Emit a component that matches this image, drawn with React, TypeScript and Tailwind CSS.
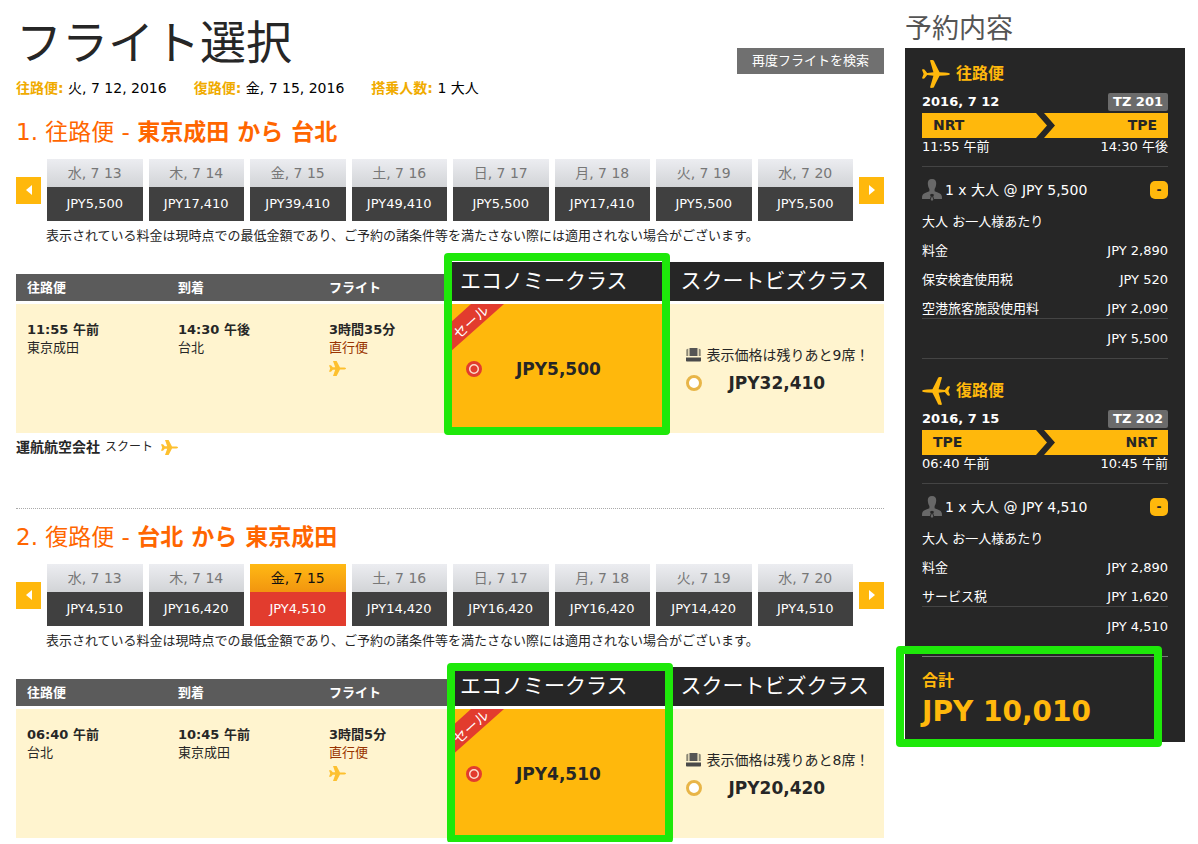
import React from 'react';

type Fare = { day: string; price: string; active?: boolean };

type Leg = {
  id: string;
  number: number;
  label: string;
  from: string;
  to: string;
  fares: Fare[];
  departTime: string;
  arriveTime: string;
  duration: string;
  economy: string;
  biz: string;
  seats: number;
};

const DAYS = ['水, 7 13', '木, 7 14', '金, 7 15', '土, 7 16', '日, 7 17', '月, 7 18', '火, 7 19', '水, 7 20'];

const fares = (prices: string[], active = -1): Fare[] =>
  prices.map((price, i) => ({ day: DAYS[i], price, active: i === active }));

const LEGS: Leg[] = [
  {
    id: 'outbound',
    number: 1,
    label: '往路便',
    from: '東京成田',
    to: '台北',
    fares: fares(['JPY5,500', 'JPY17,410', 'JPY39,410', 'JPY49,410', 'JPY5,500', 'JPY17,410', 'JPY5,500', 'JPY5,500']),
    departTime: '11:55 午前',
    arriveTime: '14:30 午後',
    duration: '3時間35分',
    economy: 'JPY5,500',
    biz: 'JPY32,410',
    seats: 9,
  },
  {
    id: 'inbound',
    number: 2,
    label: '復路便',
    from: '台北',
    to: '東京成田',
    fares: fares(['JPY4,510', 'JPY16,420', 'JPY4,510', 'JPY14,420', 'JPY16,420', 'JPY16,420', 'JPY14,420', 'JPY4,510'], 2),
    departTime: '06:40 午前',
    arriveTime: '10:45 午前',
    duration: '3時間5分',
    economy: 'JPY4,510',
    biz: 'JPY20,420',
    seats: 8,
  },
];

function SmallPlane() {
  return (
    <svg viewBox="0 0 17 15" className="h-[15px] w-[17px] shrink-0 fill-[#fdc02f]" aria-hidden="true">
      <path d="M17 7.5C17 6.8 15.8 6.5 14.4 6.5H11L7.6 0H4L6.2 6.2H3.8L2 4.2H0L1.2 7.5L0 10.8H2L3.8 8.8H6.2L4 15H7.6L11 8.5H14.4C15.8 8.5 17 8.2 17 7.5Z" />
    </svg>
  );
}

function LargePlane({ flipped = false }: { flipped?: boolean }) {
  return (
    <svg
      viewBox="0 0 28 28"
      className={`h-7 w-7 shrink-0 fill-[#ffb80c] ${flipped ? '-scale-x-100' : ''}`}
      aria-hidden="true"
    >
      <path d="M28 14C28 13.2 26 12.7 23 12.5L17.6 12.2C15.5 8.4 13.4 4 12 1C11.4 0 9 -.2 8 .6L11.4 12.2L5.2 12.9L2.6 9.8C2 9.2 .6 9.2 0 9.8L1.6 14L0 18.2C.6 18.8 2 18.8 2.6 18.2L5.2 15.1L11.4 15.8L8 27.4C9 28.2 11.4 28 12 27C13.4 24 15.5 19.6 17.6 15.8L23 15.5C26 15.3 28 14.8 28 14Z" />
    </svg>
  );
}

function PersonIcon() {
  return (
    <svg viewBox="0 0 20 22" className="h-[22px] w-5 shrink-0 fill-[#686868]" aria-hidden="true">
      <path d="M10 0C6.9 0 5.7 2 5.8 4.6C5.9 7 6.6 9 7.4 10V12.2C4 13.6 .5 14.4 .1 17.4L0 20H8L8.8 17.2L7.8 15.8L10 14.8L12.2 15.8L11.2 17.2L12 20H20L19.9 17.4C19.5 14.4 16 13.6 12.6 12.2V10C13.4 9 14.1 7 14.2 4.6C14.3 2 13.1 0 10 0Z" />
      <path d="M10 17L8.6 20.4L10 22L11.4 20.4Z" />
    </svg>
  );
}

function SeatIcon() {
  return (
    <svg viewBox="0 0 15 14" className="h-[14px] w-[15px] shrink-0" aria-hidden="true">
      <path d="M3.5 0H11.5V8H3.5Z" fill="#555" />
      <path d="M.3 1.5L2.3.5V8H.3ZM12.7.5L14.7 1.5V8H12.7Z" fill="#8b8775" />
      <path d="M0 9.5H15V12.5C15 13.3 14.5 13.6 14 13.6H1C.5 13.6 0 13.3 0 12.5Z" fill="#4a4a4a" />
    </svg>
  );
}

function PagerButton({ direction }: { direction: 'prev' | 'next' }) {
  return (
    <button
      type="button"
      aria-label={direction === 'prev' ? '前へ' : '次へ'}
      className="flex h-[27px] w-[25px] shrink-0 items-center justify-center bg-[#ffb80c]"
    >
      <svg viewBox="0 0 6 10" className="h-[10px] w-[6px] fill-white" aria-hidden="true">
        <path d={direction === 'prev' ? 'M6 0V10L0 5Z' : 'M0 0V10L6 5Z'} />
      </svg>
    </button>
  );
}

function FareTabs({ items }: { items: Fare[] }) {
  return (
    <div className="mt-[13px] flex items-center gap-[6px]">
      <PagerButton direction="prev" />
      <div className="flex flex-1 gap-[6px]">
        {items.map((f) => (
          <button key={f.day} type="button" className="flex flex-1 flex-col whitespace-nowrap text-center">
            <span
              className={`h-[28px] w-full bg-linear-to-b text-[14px] leading-[28px] ${
                f.active ? 'from-[#ffb914] to-[#f2950f] text-[#111111]' : 'from-[#ecedf1] to-[#d2d4d7] text-[#777777]'
              }`}
            >
              {f.day}
            </span>
            <span
              className={`h-[34px] w-full text-[13px] leading-[34px] text-white ${
                f.active ? 'bg-[#e23c2e]' : 'bg-[#404040]'
              }`}
            >
              {f.price}
            </span>
          </button>
        ))}
      </div>
      <PagerButton direction="next" />
    </div>
  );
}

function FlightTable({ leg, highlight }: { leg: Leg; highlight: string }) {
  return (
    <div className="relative mt-4">
      <table className="w-full table-fixed border-collapse text-left text-[13px] text-[#262626]">
        <colgroup>
          <col className="w-[17.4%]" />
          <col className="w-[17.4%]" />
          <col className="w-[15.2%]" />
          <col className="w-[25.4%]" />
          <col className="w-[24.6%]" />
        </colgroup>
        <thead>
          <tr className="align-bottom leading-[27px]">
            {['往路便', '到着', 'フライト'].map((h) => (
              <th key={h} scope="col" className="p-0 font-bold text-white">
                <div className="bg-[#5b5b5b] pl-[11px]">{h}</div>
              </th>
            ))}
            <th scope="col" className="h-[39px] bg-[#262626] py-0 pl-[10px] text-[21px] font-normal text-white">
              <div className="leading-[39px]">エコノミークラス</div>
            </th>
            <th scope="col" className="bg-[#262626] py-0 pl-[10px] text-[21px] font-normal text-white">
              <div className="leading-[39px]">スクートビズクラス</div>
            </th>
          </tr>
        </thead>
        <tbody>
          <tr className="border-t-[3px] border-white bg-[#fff4cf] align-top leading-[18px]">
            <td className="py-[17px] pl-[11px]">
              <div className="font-bold">{leg.departTime}</div>
              <div>{leg.from}</div>
            </td>
            <td className="py-[17px] pl-[11px]">
              <div className="font-bold">{leg.arriveTime}</div>
              <div>{leg.to}</div>
            </td>
            <td className="py-[17px] pl-[11px]">
              <div className="font-bold">{leg.duration}</div>
              <div className="mb-1 text-[#993300]">直行便</div>
              <SmallPlane />
            </td>
            <td className="bg-[#ffb80c] p-0">
              <div className="relative flex h-[129px] items-center pl-4">
                <svg viewBox="0 0 54 48" className="absolute top-0 left-0 h-12 w-[54px] fill-[#e23c2e]" aria-hidden="true">
                  <path d="M21 0H54L0 48V19Z" />
                </svg>
                <span className="absolute top-[7px] left-0 -rotate-42 text-[14px] leading-[22px] whitespace-nowrap text-white">
                  セール
                </span>
                <label className="flex items-center gap-[34px] text-[17px] font-bold">
                  <input
                    type="radio"
                    name={leg.id}
                    defaultChecked
                    className="h-4 w-4 appearance-none rounded-full border-[3px] border-[#e23c2e] bg-[radial-gradient(circle,#e23c2e_3px,#fbe0d0_4px)]"
                  />
                  {leg.economy}
                </label>
              </div>
            </td>
            <td className="p-0">
              <div className="flex h-[129px] flex-col justify-center pl-4 leading-7">
                <div className="flex items-center gap-[5px] text-[14px] whitespace-nowrap">
                  <SeatIcon />
                  表示価格は残りあと{leg.seats}席！
                </div>
                <label className="flex items-center gap-[26px] text-[17px] font-bold">
                  <input
                    type="radio"
                    name={leg.id}
                    className="h-4 w-4 appearance-none rounded-full border-[3px] border-[#e8b548] bg-white"
                  />
                  {leg.biz}
                </label>
              </div>
            </td>
          </tr>
        </tbody>
      </table>
      <div className={`pointer-events-none absolute rounded-[4px] border-8 border-[#1ee80a] ${highlight}`} />
    </div>
  );
}

function LegSection({ leg, highlight }: { leg: Leg; highlight: string }) {
  return (
    <section>
      <h2 className="text-[23px] leading-7 text-[#ff6600]">
        {leg.number}. {leg.label} -{' '}
        <b>
          {leg.from} から {leg.to}
        </b>
      </h2>
      <FareTabs items={leg.fares} />
      <p className="mt-[5px] pl-[30px] text-[13px] leading-5 text-[#262626]">
        表示されている料金は現時点での最低金額であり、ご予約の諸条件等を満たさない際には適用されない場合がございます。
      </p>
      <FlightTable leg={leg} highlight={highlight} />
    </section>
  );
}

type SummaryProps = {
  title: string;
  flipped?: boolean;
  date: string;
  flight: string;
  from: string;
  to: string;
  depart: string;
  arrive: string;
  total: string;
  items: [string, string][];
};

function SummaryLeg({ title, flipped, date, flight, from, to, depart, arrive, total, items }: SummaryProps) {
  return (
    <section className="text-[13px]">
      <h3 className="flex h-8 items-center gap-[6px] text-[16px] font-bold text-[#ffb80c]">
        <LargePlane flipped={flipped} />
        {title}
      </h3>
      <div className="mt-[3px] flex items-center justify-between font-bold leading-[18px]">
        <span>{date}</span>
        <span className="rounded-[2px] bg-[#6b6b6b] px-[5px]">{flight}</span>
      </div>
      <div className="mt-[2px] grid h-[25px] grid-cols-[1fr_19px_1fr] items-center bg-[#ffb80c] px-[11px] text-[14px] font-bold text-[#262626]">
        <span>{from}</span>
        <svg viewBox="0 0 19 25" className="h-[25px] w-[19px] fill-[#262626]" aria-hidden="true">
          <path d="M0 0H8L19 12.5L8 25H0L11 12.5Z" />
        </svg>
        <span className="text-right">{to}</span>
      </div>
      <div className="flex justify-between leading-[18px]">
        <span>{depart}</span>
        <span>{arrive}</span>
      </div>
      <div className="mt-[10px] flex items-center border-t border-[#444444] pt-3">
        <PersonIcon />
        <span className="ml-[3px] flex-1 text-[14px] leading-[22px]">1 x 大人 @ JPY {total}</span>
        <button
          type="button"
          aria-label="内訳を閉じる"
          className="h-[18px] w-[18px] rounded-[5px] bg-[#ffb80c] text-[12px] leading-[16px] font-bold text-[#262626]"
        >
          -
        </button>
      </div>
      <p className="mt-3 leading-[18px]">大人 お一人様あたり</p>
      <dl>
        {items.map(([name, price]) => (
          <div key={name} className="mt-[11px] flex justify-between leading-[18px]">
            <dt>{name}</dt>
            <dd>JPY {price}</dd>
          </div>
        ))}
      </dl>
      <div className="border-t border-[#444444] pt-[10px] text-right leading-5">JPY {total}</div>
    </section>
  );
}

export default function App() {
  return (
    <div className="flex items-start bg-white pb-1 font-['DejaVu_Sans','Noto_Sans_CJK_JP',sans-serif]">
      <main className="min-w-0 flex-1 pl-4">
        <header className="flex items-end justify-between pt-3">
          <h1 className="text-[46px] leading-[62px] text-[#262626]">フライト選択</h1>
          <button type="button" className="h-[26px] bg-[#707070] px-[15px] text-[13px] text-white">
            再度フライトを検索
          </button>
        </header>
        <div className="mt-1 mb-5 flex gap-[27px] text-[14px] leading-5 text-black">
          <span>
            <b className="text-[#f0ab00]">往路便:</b> 火, 7 12, 2016
          </span>
          <span>
            <b className="text-[#f0ab00]">復路便:</b> 金, 7 15, 2016
          </span>
          <span>
            <b className="text-[#f0ab00]">搭乗人数:</b> 1 大人
          </span>
        </div>

        <LegSection leg={LEGS[0]} highlight="-top-[9px] left-[49.3%] h-[182px] w-[26%]" />

        <div className="mt-1 flex items-center text-[12px] leading-5 text-[#262626]">
          <b className="mr-[5px] text-[14px]">運航航空会社</b>
          スクート
          <span className="ml-2">
            <SmallPlane />
          </span>
        </div>
        <hr className="mt-[51px] mb-[14px] border-t border-dotted border-[#aaaaaa]" />

        <LegSection leg={LEGS[1]} highlight="-top-[4px] left-[49.7%] h-[180px] w-[26%]" />
      </main>

      <aside className="mr-[13px] ml-[21px] w-[280px] shrink-0 pt-[9px]">
        <h2 className="text-[27px] leading-[39px] text-[#555555]">予約内容</h2>
        <div className="bg-[#262626] px-[17px] pt-[10px] text-white">
          <SummaryLeg
            title="往路便"
            date="2016, 7 12"
            flight="TZ 201"
            from="NRT"
            to="TPE"
            depart="11:55 午前"
            arrive="14:30 午後"
            total="5,500"
            items={[
              ['料金', '2,890'],
              ['保安検査使用税', '520'],
              ['空港旅客施設使用料', '2,090'],
            ]}
          />
          <hr className="mt-[9px] mb-4 border-t border-[#444444]" />
          <SummaryLeg
            title="復路便"
            flipped
            date="2016, 7 15"
            flight="TZ 202"
            from="TPE"
            to="NRT"
            depart="06:40 午前"
            arrive="10:45 午前"
            total="4,510"
            items={[
              ['料金', '2,890'],
              ['サービス税', '1,620'],
            ]}
          />
          <div className="relative mt-[19px] border-t border-[#777777] pt-3 pb-[11px] font-bold text-[#ffb80c]">
            <div className="text-[16px] leading-6">合計</div>
            <div className="text-[28px] leading-[38px]">JPY 10,010</div>
            <div className="pointer-events-none absolute -top-[11px] right-[6px] -bottom-[5px] -left-[26px] rounded-[4px] border-8 border-[#1ee80a]" />
          </div>
        </div>
      </aside>
    </div>
  );
}
